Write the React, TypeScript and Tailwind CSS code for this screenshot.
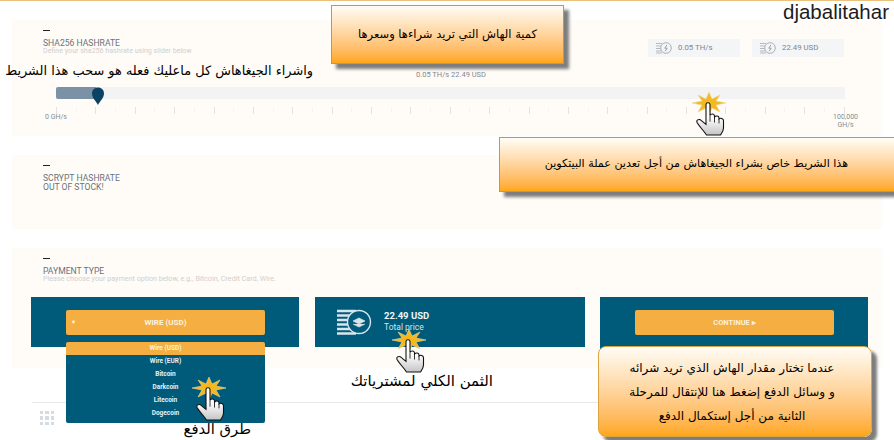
const ticks = Array.from({ length: 41 }, (_, i) => i);
const coins = ["Wire (USD)", "Wire (EUR)", "Bitcoin", "Darkcoin", "Litecoin", "Dogecoin"];

function Hand() {
  return (
    <svg width="42" height="44" viewBox="0 0 42 44" className="block">
      <defs>
        <linearGradient id="handFill" x1="0" y1="0" x2="0" y2="1">
          <stop offset="0.45" stopColor="#ffffff" />
          <stop offset="1" stopColor="#c4c4c4" />
        </linearGradient>
      </defs>
      <polygon
        points="20,0 23,7 31,3 27,9 37,11 27,13 31,20 23,16 20,23 17,16 9,20 13,13 3,11 13,9 9,3 17,7"
        fill="#f5b81e"
        stroke="#e8d9a0"
        strokeWidth="0.6"
      />
      <g transform="translate(0 0.8) scale(1 0.9)">
        <path
          d="M17 13 C17 10.500 21 10.500 21 13 L21 25 C22 23 25 23 25.500 25.500 L25.500 27 C27 25 30 25.500 30 28 L30 29 C31.500 27.500 34.500 28.500 34.500 31 L34.500 39 C34.500 42 32.500 45 31.500 47 L17.500 47 C15.500 43 11 38.500 8 33 C7 30.500 9.500 29 11.500 30 L17 35 Z"
          fill="url(#handFill)"
          stroke="#111"
          strokeWidth="1.1"
        />
        <path d="M21 25 V32 M25.500 27 V33 M30 29 V34" stroke="#111" strokeWidth="0.9" fill="none" />
      </g>
    </svg>
  );
}

function ChipIcon() {
  return (
    <svg width="16" height="12" viewBox="0 0 16 12" className="shrink-0">
      <path d="M0 1.500h6M0 4h5M0 6.500h5M0 9h5M0 11h6" stroke="#b4bac0" strokeWidth="1.200" />
      <circle cx="10" cy="6" r="5.300" fill="#f4f5f6" stroke="#aab1b8" />
      <path d="M10.800 3l-2 3.200h2.400l-2 3" stroke="#8d969e" strokeWidth="0.9" fill="none" />
    </svg>
  );
}

function TotalIcon() {
  return (
    <svg width="35" height="26" viewBox="0 0 35 26" className="shrink-0">
      <path d="M0 2h19M0 6.500h15M0 11h13M0 15.500h13M0 20h15M0 24.500h19" stroke="#d7e6ec" strokeWidth="2.600" />
      <circle cx="22" cy="13" r="11.500" fill="#005a7a" stroke="#d7e6ec" strokeWidth="1.400" />
      <path d="M16 12l6-3 6 3-6 3z M16 15l6 3 6-3" fill="#d7e6ec" stroke="#d7e6ec" strokeWidth="0.700" />
    </svg>
  );
}

export default function App() {
  return (
    <div className="relative w-[894px] h-[440px] overflow-hidden bg-white border-t border-[#e9c27e] font-['Roboto',sans-serif]">
      <p className="absolute right-[5px] top-[-1px] text-[20.5px] leading-[24px] text-[#1c1c1c] font-['Liberation_Sans',sans-serif]">
        djabalitahar
      </p>

      <section className="mt-[19px] mx-[12px] h-[116px] bg-[#fffcf7] pl-[31px] pr-[38px] pt-[7px]">
        <div className="flex justify-between">
          <div>
            <div className="w-[7px] h-px bg-[#222] mt-[3px] mb-[8px]" />
            <h2 className="text-[8.600px] leading-[8px] text-[#69727c]">SHA256 HASHRATE</h2>
            <p className="text-[7.100px] leading-[8px] text-[#cfcfcf]">Define your sha256 hashrate using slider below</p>
          </div>
          <div className="flex gap-[12px] mt-[12px]">
            <div className="w-[92px] h-[18px] bg-[#f4f5f6] flex items-center gap-[6px] pl-[8px] text-[7.800px] text-[#7b858e]">
              <ChipIcon />
              0.05 TH/s
            </div>
            <div className="w-[92px] h-[18px] bg-[#f4f5f6] flex items-center gap-[6px] pl-[8px] text-[7.800px] text-[#7b858e]">
              <ChipIcon />
              22.49 USD
            </div>
          </div>
        </div>
        <p className="mt-[13px] pl-[15px] text-center text-[7.500px] leading-[9px] text-[#7f8890]">0.05 TH/s 22.49 USD</p>
        <div className="relative mt-[8px] ml-[13px] mr-[-1px] h-[12px] bg-[#f3f3f4]">
          <div className="h-full w-[40px] bg-[#7b92a6] rounded-l-[2px]" />
          <svg width="14" height="18" viewBox="0 0 14 18" className="absolute left-[35px] top-0">
            <path d="M7 18 C5 14 1 11 1 6.500 C1 3 3.500 0.500 7 0.500 C10.500 0.500 13 3 13 6.500 C13 11 9 14 7 18 Z" fill="#0c4263" />
          </svg>
        </div>
        <div className="mt-[8px] ml-[13px] mr-[-1px] flex justify-between items-start">
          {ticks.map((t) => (
            <div key={t} className={t % 2 ? "w-px h-[4px] mt-[1px] bg-[#f6f3ed]" : "w-px h-[7px] bg-[#e6e3dd]"} />
          ))}
        </div>
        <div className="flex justify-between mt-[-1px] ml-[2px] mr-[-14px] text-[7px] leading-[8px] text-[#858d94]">
          <span>0 GH/s</span>
          <span className="text-center">
            100,000
            <br />
            GH/s
          </span>
        </div>
      </section>

      <section className="mt-[19px] mx-[12px] h-[74px] bg-[#fffcf7] pl-[31px] pt-[7px]">
        <div className="w-[7px] h-px bg-[#222] mt-[3px] mb-[8px]" />
        <h2 className="text-[8.600px] leading-[9px] text-[#69727c]">SCRYPT HASHRATE</h2>
        <h2 className="text-[8.600px] leading-[9px] text-[#69727c]">OUT OF STOCK!</h2>
      </section>

      <section className="mt-[19px] mx-[12px] h-[120px] bg-[#fffcf7] pt-[7px]">
        <div className="pl-[31px]">
          <div className="w-[7px] h-px bg-[#222] mt-[3px] mb-[8px]" />
          <h2 className="text-[8.600px] leading-[8px] text-[#69727c]">PAYMENT TYPE</h2>
          <p className="text-[7.200px] leading-[8px] text-[#cfcfcf]">Please choose your payment option below, e.g., Bitcoin, Credit Card, Wire.</p>
        </div>
        <div className="mt-[14px] ml-[19px] flex gap-[16px]">
          <div className="relative w-[268px] h-[50px] bg-[#005a7a] pt-[13px] px-[35px]">
            <button className="relative block w-[199px] h-[25px] rounded-[2px] bg-[#f4ae42] text-[8px] font-bold text-[#fff3de]">
              <span className="absolute left-[6px] top-[8px] text-[6px] leading-[8px]">▾</span>
              WIRE (USD)
            </button>
            <ul className="absolute left-[35px] top-[45px] w-[199px] h-[81px] rounded-[2px] bg-[#005a7a] text-center text-[6.500px] leading-[13px] font-bold text-[#e6f1f5]">
              {coins.map((c, i) => (
                <li key={c} className={i === 0 ? "bg-[#f4ae42] rounded-t-[2px] text-[#fff3de]" : ""}>
                  {c}
                </li>
              ))}
            </ul>
          </div>
          <div className="w-[270px] h-[50px] bg-[#005a7a] flex items-center gap-[12px] pl-[22px]">
            <TotalIcon />
            <div className="mt-[-2px]">
              <p className="text-[9.500px] leading-[12px] font-bold text-[#eef6f8]">22.49 USD</p>
              <p className="text-[8.500px] leading-[11px] text-[#cfe6ec]">Total price</p>
            </div>
          </div>
          <div className="ml-[-1px] w-[268px] h-[52px] bg-[#005a7a] pt-[13px] px-[35px]">
            <button className="block w-[199px] h-[25px] rounded-[2px] bg-[#f4ae42] text-[7.500px] font-bold text-[#fdf0dc]">
              CONTINUE ▸
            </button>
          </div>
        </div>
      </section>

      <footer className="mt-[34px] ml-[32px] mr-[294px] border-t border-[#e9e9e9] pt-[8px] pl-[8px]">
        <div className="grid grid-cols-3 gap-[2px] w-[14px] h-[14px]">
          {ticks.slice(0, 9).map((t) => (
            <div key={t} className="bg-[#d5dbe0]" />
          ))}
        </div>
      </footer>

      <div className="absolute left-[331px] top-[4px] w-[233px] h-[59px] border border-[#c9973f] bg-gradient-to-b from-[#fffdf6] to-[#ffa70f] shadow-[5px_5px_3px_#7d7d7d] flex items-center justify-center">
        <p dir="rtl" className="font-['DejaVu_Sans',sans-serif] text-[11.500px] text-black">كمية الهاش التي تريد شراءها وسعرها</p>
      </div>

      <p dir="rtl" className="absolute left-[6px] top-[61px] w-[307px] whitespace-nowrap font-['DejaVu_Sans',sans-serif] text-[12.900px] leading-[18px] text-black">
        واشراء الجيغاهاش كل ماعليك فعله هو سحب هذا الشريط
      </p>

      <div className="absolute left-[499px] top-[136px] w-[400px] h-[55px] border border-[#c9973f] bg-gradient-to-b from-[#fffdf6] to-[#ffa70f] shadow-[5px_5px_3px_#7d7d7d] flex items-center pl-[45px]">
        <p dir="rtl" className="w-[303px] whitespace-nowrap font-['DejaVu_Sans',sans-serif] text-[11.100px] text-black">
          هذا الشريط خاص بشراء الجيغاهاش من أجل تعدين عملة البيتكوين
        </p>
      </div>

      <div className="absolute left-[598px] top-[345px] w-[274px] h-[91px] rounded-[8px] border border-[#d9a441] bg-gradient-to-b from-[#fffdf6] to-[#ffa70f] shadow-[5px_5px_3px_#7d7d7d] flex flex-col justify-center text-center pr-[6px]">
        <p dir="rtl" className="font-['DejaVu_Sans',sans-serif] text-[12px] leading-[24px] text-black">
          عندما تختار مقدار الهاش الذي تريد شرائه
          <br />
          و وسائل الدفع إضغط هنا للإنتقال للمرحلة
          <br />
          الثانية من أجل إستكمال الدفع
        </p>
      </div>

      <p dir="rtl" className="absolute left-[352px] top-[370px] w-[141px] whitespace-nowrap font-['DejaVu_Sans',sans-serif] text-[15px] leading-[20px] text-black">
        الثمن الكلي لمشترياتك
      </p>
      <p dir="rtl" className="absolute left-[184px] top-[419px] w-[67px] whitespace-nowrap font-['DejaVu_Sans',sans-serif] text-[14.800px] leading-[18px] text-black">
        طرق الدفع
      </p>

      <div className="absolute left-[689px] top-[91px]"><Hand /></div>
      <div className="absolute left-[389px] top-[328px]"><Hand /></div>
      <div className="absolute left-[189px] top-[376px]"><Hand /></div>
    </div>
  );
}
